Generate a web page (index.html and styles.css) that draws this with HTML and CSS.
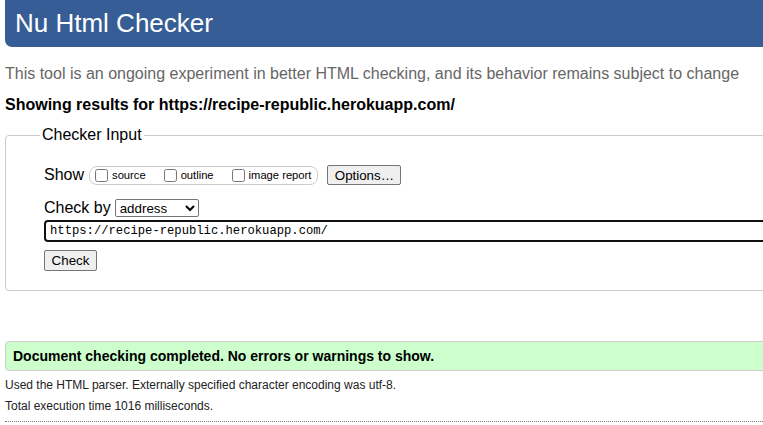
FILE: index.html
```html
<!DOCTYPE html>
<html lang="en">
<head>
<meta charset="utf-8">
<title>Nu Html Checker</title>
<link rel="stylesheet" href="styles.css">
</head>
<body>
<div class="page">
  <h1 class="title">Nu Html Checker</h1>
  <p class="intro">This tool is an ongoing experiment in better HTML checking, and its behavior remains subject to change</p>
  <p class="results">Showing results for https://recipe-republic.herokuapp.com/</p>
  <fieldset class="checker">
    <legend class="legend">Checker Input</legend>
    <div class="row row-show">
      <span class="row-label">Show</span>
      <span class="options-box">
        <label class="opt"><input type="checkbox" class="cb"><span>source</span></label>
        <label class="opt"><input type="checkbox" class="cb"><span>outline</span></label>
        <label class="opt"><input type="checkbox" class="cb"><span>image report</span></label>
      </span>
      <button class="btn btn-options" type="button">Options…</button>
    </div>
    <div class="row row-by">
      <span class="row-label">Check by</span>
      <select class="select">
        <option>address</option>
      </select>
    </div>
    <div class="row row-url">
      <input class="url" type="text" value="https://recipe-republic.herokuapp.com/">
    </div>
    <div class="row row-submit">
      <button class="btn btn-check" type="button">Check</button>
    </div>
  </fieldset>
  <div class="success">Document checking completed. No errors or warnings to show.</div>
  <p class="details">Used the HTML parser. Externally specified character encoding was utf-8.</p>
  <p class="details">Total execution time 1016 milliseconds.</p>
  <div class="rule"></div>
</div>
</body>
</html>
```
FILE: styles.css
```css
html, body {
  margin: 0;
  padding: 0;
  overflow: hidden;
  background: #fff;
}
body {
  font-family: "Liberation Sans", Arial, sans-serif;
  color: #000;
  width: 763px;
  height: 425px;
}
.page {
  padding-left: 5px;
  width: 820px;
}
.title {
  margin: 0;
  height: 47px;
  box-sizing: border-box;
  padding: 8px 0 9px 10px;
  font-size: 26px;
  line-height: 30px;
  font-weight: normal;
  color: #fff;
  background: #365d95;
  border-radius: 0 0 0 7px;
}
.intro {
  margin: 18px 0 0;
  font-size: 16px;
  line-height: 18px;
  color: #666;
}
.results {
  margin: 13px 0 0;
  font-size: 16px;
  line-height: 18px;
  font-weight: bold;
}
.checker {
  margin: 12px 0 0;
  padding: 0 0 19px 38px;
  border: 1px solid #ccc;
  border-radius: 4px;
  min-width: 0;
}
.legend {
  margin-left: -4px;
  padding: 0 2px;
  font-size: 16px;
  line-height: 18px;
}
.row {
  display: flex;
  align-items: center;
}
.row-label {
  font-size: 16px;
  line-height: 18px;
}
.row-show {
  margin-top: 21px;
  height: 20px;
}
.options-box {
  display: flex;
  align-items: center;
  box-sizing: border-box;
  height: 19px;
  margin-left: 5px;
  padding: 0 6px 0 5px;
  border: 1px solid #ccc;
  border-radius: 8px;
  gap: 18px;
}
.opt {
  display: flex;
  align-items: center;
  font-size: 11.2px;
  line-height: 13px;
}
.cb {
  width: 13px;
  height: 13px;
  margin: 0 4px 0 0;
}
.btn {
  font-family: "Liberation Sans", Arial, sans-serif;
  font-size: 13.33px;
  color: #000;
  background: #efefef;
  border: 1px solid #767676;
  border-radius: 2px;
  padding: 0 6px;
  box-sizing: border-box;
}
.btn-options {
  margin-left: 9px;
  width: 74px;
  height: 20px;
}
.row-by {
  margin-top: 14px;
  height: 18px;
}
.select {
  margin-left: 4px;
  width: 84px;
  height: 18px;
  box-sizing: border-box;
  font-family: "Liberation Sans", Arial, sans-serif;
  font-size: 13.33px;
  color: #000;
  background: #fff;
  border: 1px solid #767676;
  border-radius: 2px;
  padding: 0;
}
.row-url {
  margin-top: 3px;
}
.url {
  box-sizing: border-box;
  width: 760px;
  height: 22px;
  margin: 0;
  padding: 0 0 0 4px;
  border: 2px solid #101010;
  border-radius: 4px;
  font-family: "Liberation Mono", "DejaVu Sans Mono", monospace;
  font-size: 12.2px;
  color: #000;
  outline: none;
}
.row-submit {
  margin-top: 8px;
}
.btn-check {
  width: 53px;
  height: 21px;
}
.success {
  margin-top: 50px;
  height: 30px;
  box-sizing: border-box;
  padding: 1px 0 0 7px;
  line-height: 27px;
  font-size: 14px;
  font-weight: bold;
  background: #ccffcc;
  border: 1px solid #ccc;
  border-radius: 4px 0 0 4px;
}
.details {
  margin: 7px 0 0;
  font-size: 12px;
  line-height: 14px;
  color: #222;
}
.rule {
  margin-top: 8px;
  border-top: 1px dotted #777;
}
```
